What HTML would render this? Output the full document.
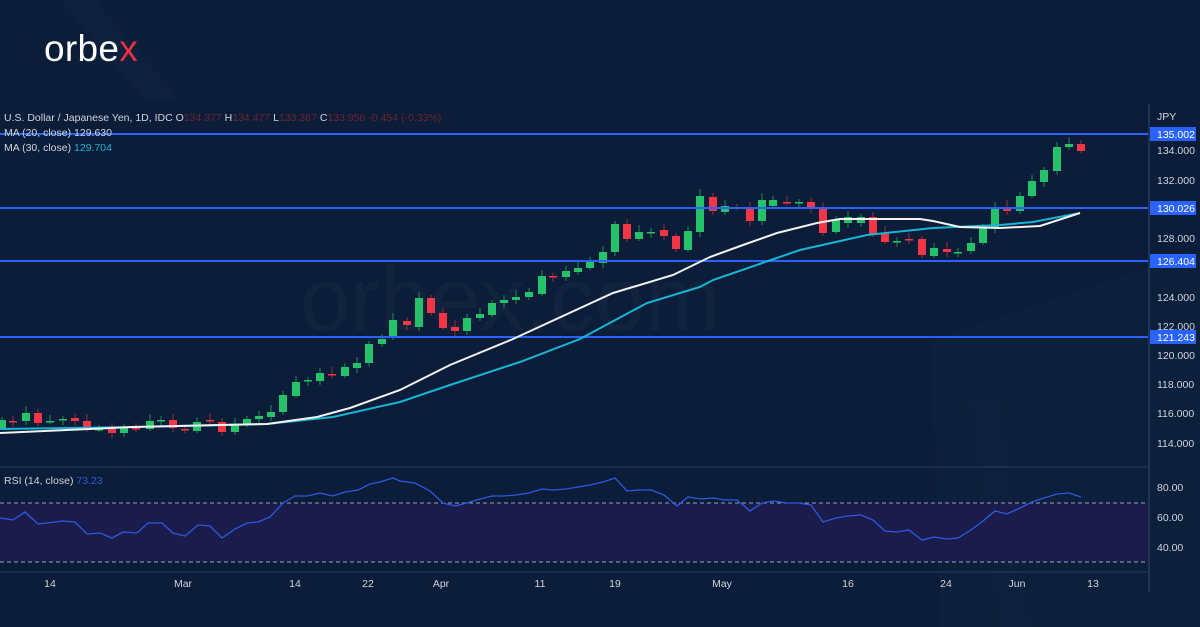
<!DOCTYPE html>
<html><head><meta charset="utf-8"><style>
body{margin:0;background:#0b1d38;width:1200px;height:627px;overflow:hidden;font-family:"Liberation Sans",sans-serif}
svg{position:absolute;left:0;top:0}
</style></head><body>
<svg width="1200" height="627" id="s" xmlns="http://www.w3.org/2000/svg" font-family="Liberation Sans, sans-serif">
<rect width="1200" height="627" fill="#0b1d38"/>
<polygon points="930,340 1200,250 1200,627 940,627" fill="#0f2340" opacity="0.4"/>
<polygon points="970,400 1000,400 1030,627 1000,627" fill="#12294a" opacity="0.3"/>
<polygon points="60,0 95,0 180,100 145,100" fill="#102443" opacity="0.5"/>
<text x="44" y="61" font-size="37" fill="#fff" letter-spacing="0.3">orbe<tspan fill="#e8303f">x</tspan></text>
<text x="300" y="330" font-size="90" fill="#ffffff" opacity="0.025">orbex.com</text>
<!-- RSI band -->
<rect x="0" y="503" width="1148" height="59" fill="#1b1c4c"/>
<line x1="0" y1="503" x2="1148" y2="503" stroke="#9aa0b8" stroke-dasharray="4,3"/>
<line x1="0" y1="562" x2="1148" y2="562" stroke="#9aa0b8" stroke-dasharray="4,3"/>
<line x1="0" y1="467" x2="1148" y2="467" stroke="#2a3a55"/>
<line x1="0" y1="572" x2="1148" y2="572" stroke="#2a3a55"/>
<line x1="1149" y1="104" x2="1149" y2="592" stroke="#3a4a62"/>
<g id="c"></g>
<g stroke="#2962ff" stroke-width="2">
<line x1="0" y1="134" x2="1148" y2="134"/><line x1="0" y1="208" x2="1148" y2="208"/>
<line x1="0" y1="261" x2="1148" y2="261"/><line x1="0" y1="337" x2="1148" y2="337"/></g>
<polyline fill="none" stroke="#18b6d4" stroke-width="2" points="0,429 133,427 267,424 333,417 400,402 450,385 520,362 580,339 647,303 700,287 713,280 800,250 867,235 933,228 1000,225 1033,222 1080,213"/>
<polyline fill="none" stroke="#f2f2f2" stroke-width="2" points="0,433 133,427 267,424 317,417 350,408 400,390 450,365 513,339 613,293 673,275 710,257 743,245 777,233 817,223 840,219 920,219 933,221 960,227 1000,228 1040,226 1080,213"/>
<polyline fill="none" stroke="#2a5ae0" stroke-width="1.3" points="0,518 13,520 25,512 38,524 63,521 75,522 87,534 100,533 112,538 123,532 137,533 148,523 162,523 173,533 185,536 198,525 210,526 222,538 235,529 247,523 258,522 270,517 283,503 295,496 307,496 320,493 333,496 345,492 358,490 370,484 380,482 393,478 400,481 415,483 430,491 443,503 455,506 467,503 480,499 492,496 504,496 516,495 529,493 542,489 553,490 566,489 578,487 590,485 603,482 615,478 627,491 639,490 651,490 664,495 677,506 688,497 700,499 713,498 725,500 737,500 750,511 762,503 773,501 787,503 799,503 811,505 823,522 836,518 848,516 861,515 873,520 885,531 897,532 909,530 922,540 934,537 947,539 958,538 971,530 983,521 995,511 1007,514 1020,508 1032,502 1044,498 1057,494 1069,493 1081,497"/>
<g font-size="10.5" fill="#d1d4dc">
<text x="4" y="121">U.S. Dollar / Japanese Yen, 1D, IDC  O<tspan fill="#6e2330">134.377</tspan>  H<tspan fill="#6e2330">134.477</tspan>  L<tspan fill="#6e2330">133.367</tspan>  C<tspan fill="#6e2330">133.956  -0.454 (-0.33%)</tspan></text>
<text x="4" y="136">MA (20, close)  129.630</text>
<text x="4" y="151">MA (30, close)  <tspan fill="#18b6d4">129.704</tspan></text>
<text x="4" y="484">RSI (14, close)  <tspan fill="#2a5ae0">73.23</tspan></text>
<text x="1157" y="120">JPY</text>
<text x="1157" y="154">134.000</text><text x="1157" y="184">132.000</text><text x="1157" y="242">128.000</text>
<text x="1157" y="301">124.000</text><text x="1157" y="330">122.000</text><text x="1157" y="359">120.000</text>
<text x="1157" y="388">118.000</text><text x="1157" y="417">116.000</text><text x="1157" y="447">114.000</text>
<text x="1157" y="491">80.00</text><text x="1157" y="521">60.00</text><text x="1157" y="551">40.00</text>
<g text-anchor="middle"><text x="50" y="587">14</text><text x="183" y="587">Mar</text><text x="295" y="587">14</text><text x="368" y="587">22</text><text x="441" y="587">Apr</text><text x="540" y="587">11</text><text x="615" y="587">19</text><text x="722" y="587">May</text><text x="848" y="587">16</text><text x="946" y="587">24</text><text x="1017" y="587">Jun</text><text x="1093" y="587">13</text></g>
</g>
<g font-size="10.5" fill="#fff">
<rect x="1150" y="127" width="46" height="14" fill="#2962ff"/><text x="1157" y="138">135.002</text>
<rect x="1150" y="201" width="46" height="14" fill="#2962ff"/><text x="1157" y="212">130.026</text>
<rect x="1150" y="254" width="46" height="14" fill="#2962ff"/><text x="1157" y="265">126.404</text>
<rect x="1150" y="330" width="46" height="14" fill="#2962ff"/><text x="1157" y="341">121.243</text>
</g>
</svg>
<script>
var d=[[2,420,428,1],[13,421,422,0],[26,413,421,1],[38,413,423,0],[50,421,422,1],[63,419,420,1],[75,418,421,0],[87,421,429,0],[99,429,430,1],[112,429,433,0],[124,427,433,1],[136,428,429,0],[150,421,429,1],[161,420,421,1],[173,420,428,0],[185,429,430,0],[197,422,431,1],[210,420,421,0],[222,422,432,0],[235,424,432,1],[247,419,425,1],[259,416,419,1],[271,412,417,1],[283,395,412,1],[296,382,396,1],[308,380,381,1],[320,373,381,1],[332,374,375,0],[345,367,376,1],[357,363,368,1],[369,344,363,1],[382,339,344,1],[393,320,338,1],[407,321,325,0],[419,298,327,1],[431,298,313,0],[443,313,328,0],[455,327,331,0],[467,318,331,1],[480,314,318,1],[492,303,315,1],[504,300,303,1],[516,297,300,1],[529,292,297,1],[542,276,294,1],[553,276,277,0],[566,271,277,1],[578,268,272,1],[590,261,268,1],[603,252,263,1],[615,224,252,1],[627,224,239,0],[639,232,239,1],[651,232,233,1],[664,230,236,0],[676,236,249,0],[688,231,250,1],[700,196,232,1],[713,197,211,0],[725,206,212,1],[737,207,208,0],[750,207,221,0],[762,200,221,1],[773,200,206,1],[787,202,203,0],[799,202,203,1],[811,202,209,0],[823,209,233,0],[836,220,232,1],[848,217,223,1],[861,217,223,1],[873,217,234,0],[885,233,242,0],[897,241,242,1],[909,239,240,0],[922,239,255,0],[934,248,256,1],[947,249,252,0],[958,252,253,1],[971,243,251,1],[983,227,243,1],[995,207,228,1],[1007,207,211,0],[1020,196,211,1],[1032,181,196,1],[1044,170,182,1],[1057,147,171,1],[1069,144,147,1],[1081,144,151,0]];
var h='';d.forEach(function(c,i){var col=c[3]?'#26c26a':'#f23645',wc=c[3]?'#1f8a50':'#a02a36';var w=(i*7)%5+3;
h+='<line x1="'+c[0]+'" x2="'+c[0]+'" y1="'+(c[1]-w)+'" y2="'+(c[2]+((i*3)%4+2))+'" stroke="'+wc+'" stroke-width="1"/>';
var hh=Math.max(c[2]-c[1],1.5);h+='<rect x="'+(c[0]-4)+'" y="'+c[1]+'" width="8" height="'+hh+'" fill="'+col+'"/>';});
document.getElementById('c').innerHTML=h;
</script>
</body></html>
